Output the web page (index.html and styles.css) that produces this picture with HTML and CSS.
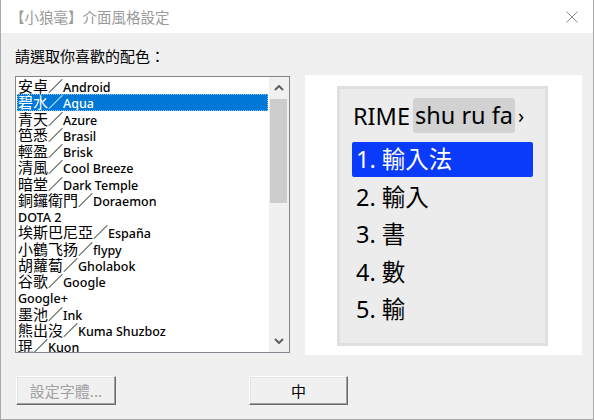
FILE: index.html
```html
<!DOCTYPE html>
<html lang="zh-Hant">
<head>
  <meta charset="UTF-8">
  <title>【小狼毫】介面風格設定</title>
  <link rel="stylesheet" href="styles.css">
</head>
<body>
  <div class="window">
    <div class="titlebar">
      <span class="title">【小狼毫】介面風格設定</span>
      <svg class="close" width="12" height="12" viewBox="0 0 12 12">
        <path d="M0.5 0.5 L11.5 11.5 M11.5 0.5 L0.5 11.5" stroke="#8c8c8c" stroke-width="1" fill="none"/>
      </svg>
    </div>

    <div class="main">
      <div class="label">請選取你喜歡的配色：</div>

      <div class="row">
        <!-- color scheme list -->
        <div class="listbox">
          <ul class="items">
            <li>安卓／<span class="en">Android</span></li>
            <li class="selected">碧水／<span class="en">Aqua</span></li>
            <li>青天／<span class="en">Azure</span></li>
            <li>笆悉／<span class="en">Brasil</span></li>
            <li>輕盈／<span class="en">Brisk</span></li>
            <li>清風／<span class="en">Cool Breeze</span></li>
            <li>暗堂／<span class="en">Dark Temple</span></li>
            <li>銅鑼衛門／<span class="en">Doraemon</span></li>
            <li><span class="en">DOTA 2</span></li>
            <li>埃斯巴尼亞／<span class="en">España</span></li>
            <li>小鶴飞扬／<span class="en">flypy</span></li>
            <li>胡蘿蔔／<span class="en">Gholabok</span></li>
            <li>谷歌／<span class="en">Google</span></li>
            <li><span class="en">Google+</span></li>
            <li>墨池／<span class="en">Ink</span></li>
            <li>熊出沒／<span class="en">Kuma Shuzboz</span></li>
            <li>琨／<span class="en">Kuon</span></li>
          </ul>
          <div class="scrollbar">
            <div class="arrow">
              <svg width="10" height="6" viewBox="0 0 10 6"><path d="M1 5 L5 1 L9 5" stroke="#606060" stroke-width="2" fill="none"/></svg>
            </div>
            <div class="thumb"></div>
            <div class="track"></div>
            <div class="arrow">
              <svg width="10" height="6" viewBox="0 0 10 6"><path d="M1 1 L5 5 L9 1" stroke="#606060" stroke-width="2" fill="none"/></svg>
            </div>
          </div>
        </div>

        <!-- preview of the candidate window -->
        <div class="preview">
          <div class="candidates">
            <div class="preedit">
              <span class="rime">RIME</span>
              <span class="input">shu ru fa</span>
              <span class="more">›</span>
            </div>
            <div class="cand hilited">1. 輸入法</div>
            <div class="cand">2. 輸入</div>
            <div class="cand">3. 書</div>
            <div class="cand">4. 數</div>
            <div class="cand">5. 輸</div>
          </div>
        </div>
      </div>

      <div class="buttons">
        <button class="btn btn-font" disabled>設定字體...</button>
        <button class="btn btn-mode">中</button>
      </div>
    </div>
  </div>
</body>
</html>
```

FILE: styles.css
```css
body {
  margin: 0;
  padding: 0;
  font-family: "Noto Sans CJK TC", "Noto Sans", sans-serif;
  color: #000;
}

.window {
  width: 594px;
  height: 420px;
  box-sizing: border-box;
  border: 1px solid #a9a9a9;
  border-top: none;
  background-color: #f0f0f0;
  display: flex;
  flex-direction: column;
}

.titlebar {
  height: 33px;
  background-color: #fff;
  display: flex;
  align-items: center;
  justify-content: space-between;
  padding: 0 15px 0 9px;
}

.title {
  font-size: 14.5px;
  color: #9a9a9a;
}

.close {
  display: block;
}

.main {
  padding: 15px 0 0 14px;
}

.label {
  font-size: 15px;
  line-height: 16px;
  height: 16px;
}

.row {
  display: flex;
  align-items: flex-start;
  gap: 15px;
  margin-top: 12px;
}

/* list box */
.listbox {
  width: 275px;
  height: 277px;
  box-sizing: border-box;
  border: 1px solid #828790;
  background-color: #fff;
  display: flex;
  overflow: hidden;
}

.items {
  list-style: none;
  margin: 0;
  padding: 1px;
  flex: 1;
  overflow: hidden;
}

.items li {
  height: 16.25px;
  line-height: 16.25px;
  font-size: 15px;
  padding-left: 1px;
  white-space: nowrap;
  box-sizing: border-box;
}

.items .en {
  font-family: "Noto Sans", sans-serif;
  font-size: 12.5px;
  color: #000;
  font-weight: 500;
}

.items li.selected {
  background-color: #0078d7;
  color: #fff;
  outline: 1px dotted #8cc0ec;
  outline-offset: -1px;
}

.items li.selected .en {
  color: #fff;
}

.scrollbar {
  width: 19px;
  background-color: #f0f0f0;
  display: flex;
  flex-direction: column;
  border-right: 1px solid #f0f0f0;
}

.arrow {
  height: 22px;
  display: flex;
  align-items: center;
  justify-content: center;
}

.thumb {
  height: 104px;
  margin: 0 1px;
  background-color: #cdcdcd;
}

.track {
  flex: 1;
}

/* candidate preview */
.preview {
  width: 277px;
  height: 280px;
  margin-top: -1px;
  background-color: #fff;
  box-sizing: border-box;
  padding: 11px 0 0 32px;
}

.candidates {
  width: 211px;
  height: 260px;
  box-sizing: border-box;
  border: 3px solid #e0e0e0;
  background-color: #ececec;
  padding: 9px 12px;
  font-family: "Noto Sans", "Noto Sans CJK TC", sans-serif;
  font-size: 23.5px;
}

.preedit {
  height: 35px;
  display: flex;
  align-items: center;
  margin-bottom: 9px;
  white-space: nowrap;
}

.rime {
  margin-left: 1px;
  margin-right: 3px;
}

.input {
  background-color: #d2d2d2;
  border-radius: 3px;
  height: 35px;
  line-height: 35px;
  padding: 0 2px;
}

.more {
  margin-left: 3px;
  font-size: 20px;
}

.cand {
  height: 35px;
  line-height: 35px;
  padding-left: 4px;
  margin-bottom: 2.5px;
  border-radius: 2px;
  white-space: nowrap;
}

.cand.hilited {
  background-color: #0a3afa;
  color: #fff;
}

/* buttons */
.buttons {
  display: flex;
  gap: 133px;
  margin-top: 21px;
  padding-left: 1px;
}

.btn {
  height: 29px;
  background-color: #f0f0f0;
  border: 1px solid;
  border-color: #fff #6a6a6a #6a6a6a #fff;
  box-shadow: inset -1px -1px 0 #a0a0a0, inset 1px 1px 0 #e3e3e3;
  font-family: "Noto Sans CJK TC", sans-serif;
  font-size: 15px;
  color: #000;
  padding: 0;
}

.btn-font {
  width: 100px;
  color: #a0a0a0;
}

.btn-mode {
  width: 99px;
}
```
